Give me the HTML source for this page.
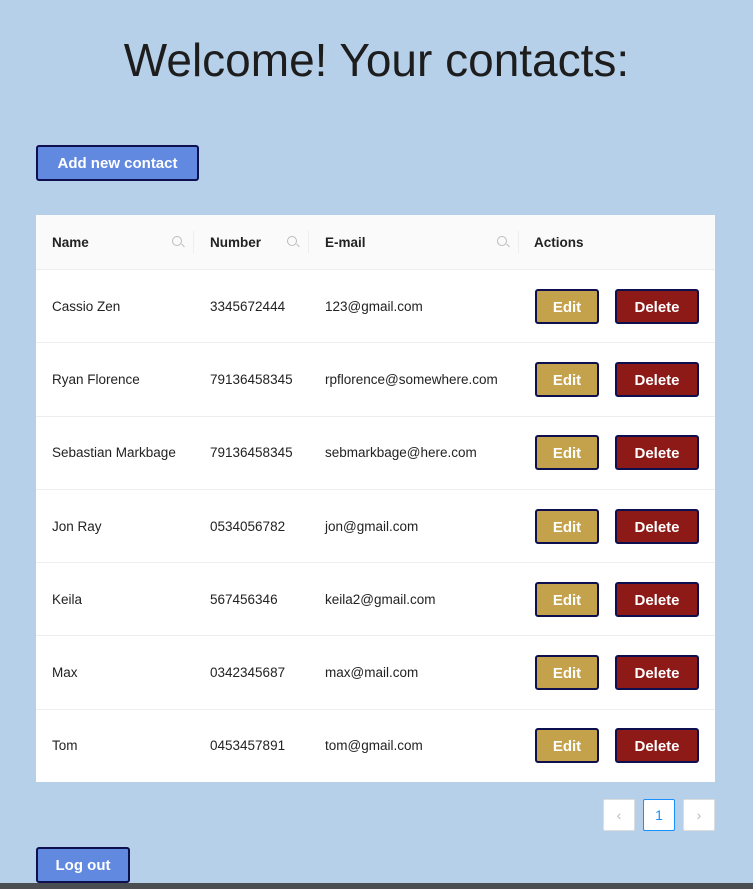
<!DOCTYPE html>
<html><head><style>
body{margin:0;width:753px;height:889px;background:#b7d0ea;font-family:"Liberation Sans",sans-serif;position:relative;overflow:hidden;color:#222}
h1{position:absolute;top:29px;left:0;width:753px;text-align:center;margin:0;font-weight:400;font-size:46px;line-height:62px;color:#1d1d1d}
.btn{position:absolute;border:2px solid #0d0f4f;border-radius:3px;color:#fff;font-weight:700;font-size:15px;text-align:center;box-sizing:border-box}
.blue{background:#6189e0}
table{position:absolute;left:36px;top:215px;width:679px;border-collapse:collapse;background:#fff;font-size:13.5px;table-layout:fixed}
th{background:#fafafa;height:54px;text-align:left;font-weight:700;padding:0 0 0 16px;border-bottom:1px solid #eee;position:relative;font-size:13.5px}
td{height:72.3px;padding:0 0 0 16px;border-bottom:1px solid #eee;white-space:nowrap}
.s{position:absolute;right:12px;top:21px;width:8px;height:8px;border:1.3px solid #bbb;border-radius:50%}
.s:after{content:"";position:absolute;left:8px;top:8px;width:4px;height:1.3px;background:#bbb;transform:rotate(45deg)}
.sep{position:absolute;right:0;top:16px;height:22px;border-right:1px solid #eee}
.e,.d{display:inline-block;height:35px;line-height:33px;border:2px solid #0d0f4f;border-radius:3px;color:#fff;font-weight:700;font-size:15px;text-align:center;box-sizing:border-box;vertical-align:middle}
.e{width:64px;background:#c4a14b;margin-right:16px}
.d{width:84px;background:#8e1a18}
.pg{position:absolute;top:799px;width:32px;height:32px;box-sizing:border-box;border:1px solid #ddd;background:#fff;border-radius:2px;text-align:center;line-height:30px;color:#bbb;font-size:14px}
</style></head><body>
<h1>Welcome! Your contacts:</h1>
<div class="btn blue" style="left:36px;top:145px;width:163px;height:36px;line-height:33px">Add new contact</div>
<table>
<tr><th style="width:142px">Name<span class="s"></span><span class="sep"></span></th><th style="width:99px">Number<span class="s"></span><span class="sep"></span></th><th style="width:194px">E-mail<span class="s"></span><span class="sep"></span></th><th style="padding-left:15px">Actions</th></tr>
<tr><td>Cassio Zen</td><td>3345672444</td><td>123@gmail.com</td><td style="padding-left:16px"><span class="e">Edit</span><span class="d">Delete</span></td></tr>
<tr><td>Ryan Florence</td><td>79136458345</td><td>rpflorence@somewhere.com</td><td style="padding-left:16px"><span class="e">Edit</span><span class="d">Delete</span></td></tr>
<tr><td>Sebastian Markbage</td><td>79136458345</td><td>sebmarkbage@here.com</td><td style="padding-left:16px"><span class="e">Edit</span><span class="d">Delete</span></td></tr>
<tr><td>Jon Ray</td><td>0534056782</td><td>jon@gmail.com</td><td style="padding-left:16px"><span class="e">Edit</span><span class="d">Delete</span></td></tr>
<tr><td>Keila</td><td>567456346</td><td>keila2@gmail.com</td><td style="padding-left:16px"><span class="e">Edit</span><span class="d">Delete</span></td></tr>
<tr><td>Max</td><td>0342345687</td><td>max@mail.com</td><td style="padding-left:16px"><span class="e">Edit</span><span class="d">Delete</span></td></tr>
<tr><td style="border:0">Tom</td><td style="border:0">0453457891</td><td style="border:0">tom@gmail.com</td><td style="border:0;padding-left:16px"><span class="e">Edit</span><span class="d">Delete</span></td></tr>
</table>
<div class="pg" style="left:603px">&lsaquo;</div>
<div class="pg" style="left:643px;border-color:#1890ff;color:#1890ff">1</div>
<div class="pg" style="left:683px">&rsaquo;</div>
<div class="btn blue" style="left:36px;top:847px;width:94px;height:36px;line-height:33px">Log out</div>
<div style="position:absolute;left:0;top:883px;width:753px;height:6px;background:#4a4d52"></div>
</body></html>
